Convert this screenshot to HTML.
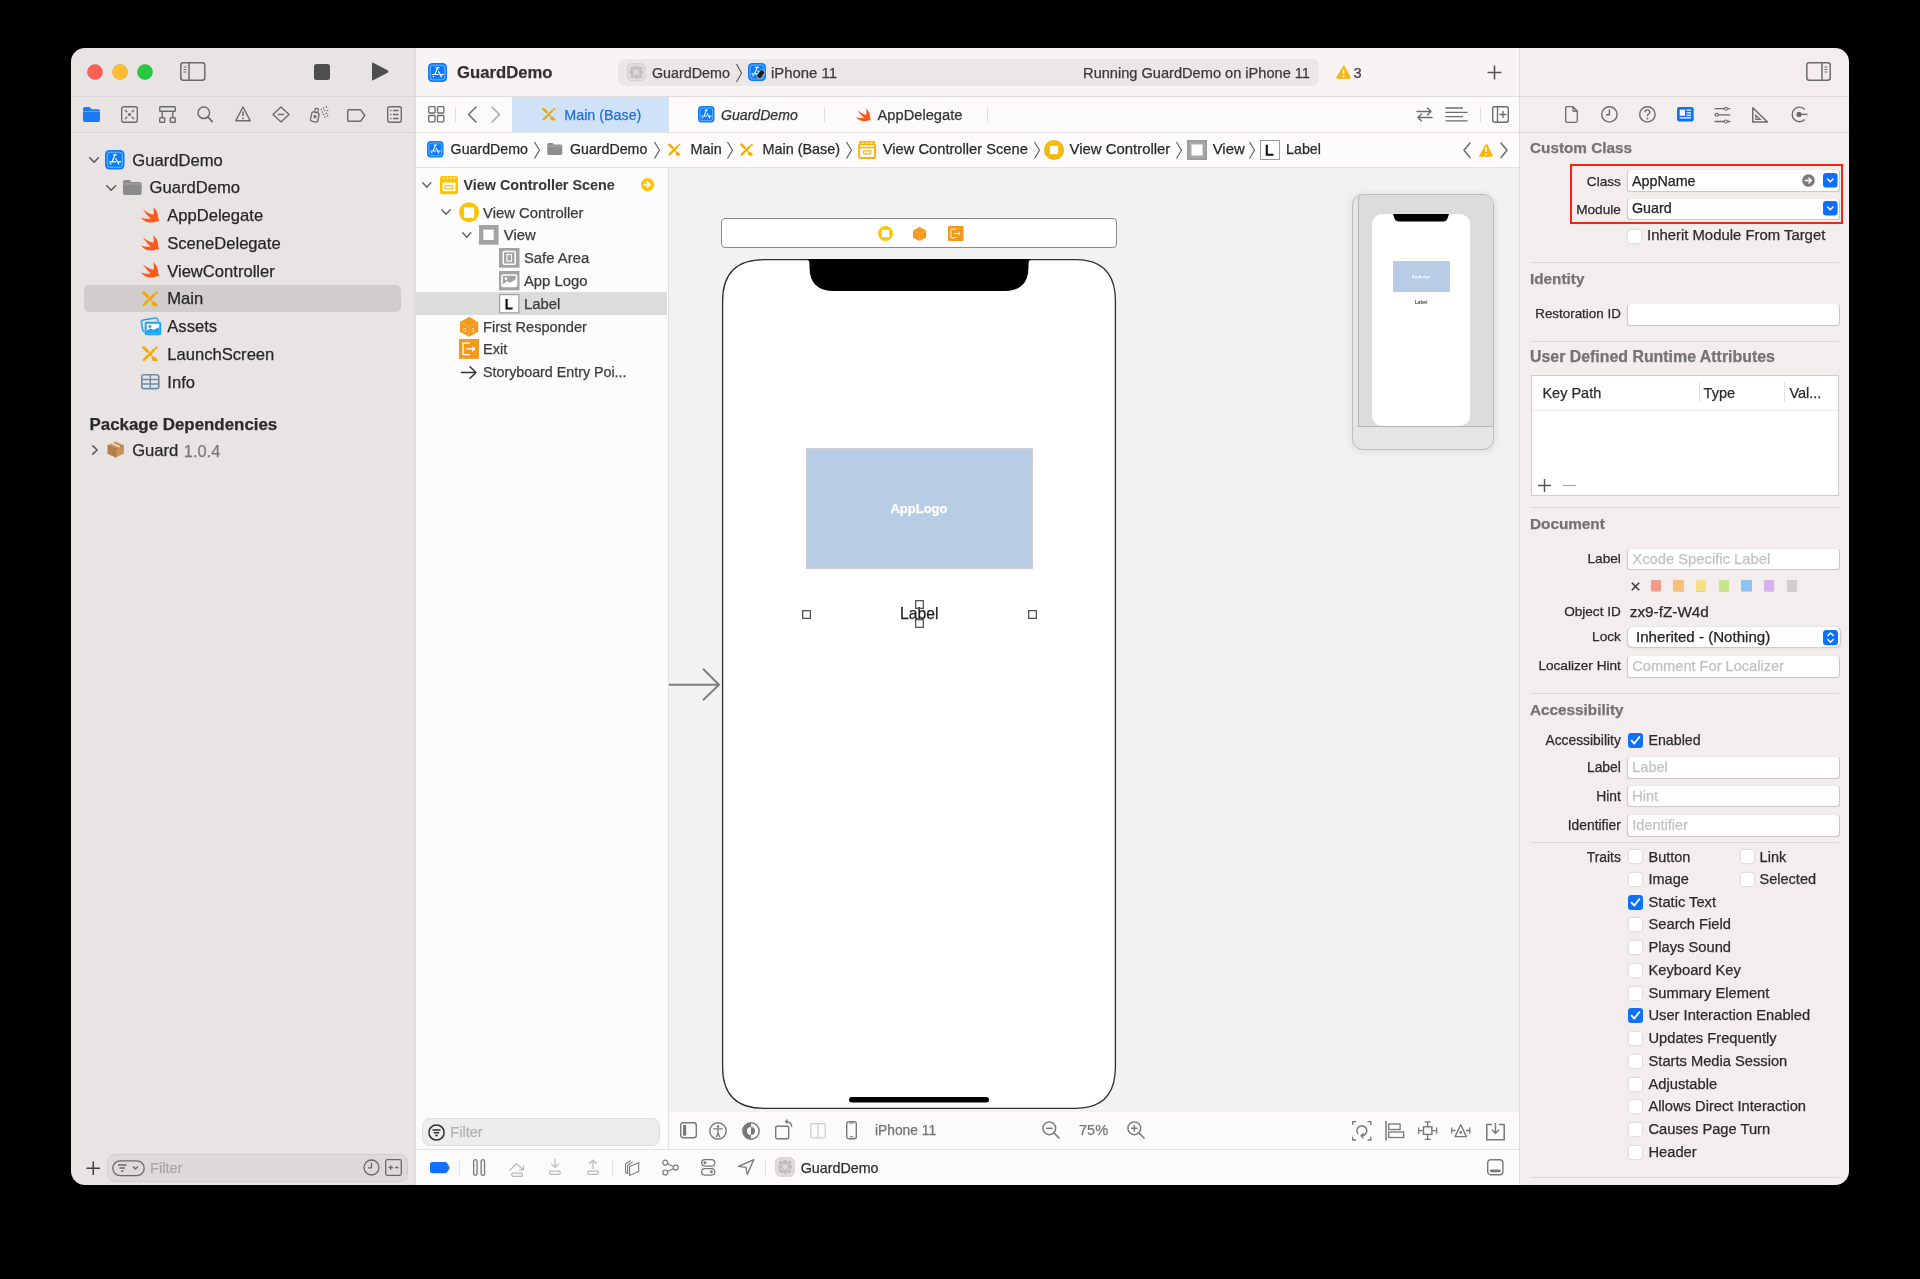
<!DOCTYPE html>
<html><head><meta charset="utf-8">
<style>
*{margin:0;padding:0;box-sizing:border-box}
html,body{width:1920px;height:1279px;background:#000;overflow:hidden;font-family:"Liberation Sans",sans-serif;color:#262626}
#win{position:absolute;left:0;top:0;width:1920px;height:1279px;clip-path:inset(48px 71px 94px 71px round 14px);-webkit-font-smoothing:antialiased;will-change:transform}
.a{position:absolute}
.t{position:absolute;white-space:nowrap;-webkit-text-stroke:0.25px currentColor}
svg{position:absolute;overflow:visible}
</style></head><body><div id="win">
<div class="a" style="left:71px;top:48px;width:345px;height:1137px;background:#e8e4e4;"></div>
<div class="a" style="left:413px;top:48px;width:3px;height:1137px;background:#e2dede;"></div>
<div class="a" style="left:71px;top:96px;width:345px;height:1px;background:#d9d5d5;"></div>
<div class="a" style="left:71px;top:132px;width:345px;height:1px;background:#d9d5d5;"></div>
<div class="a" style="left:416px;top:48px;width:1103px;height:48px;background:#f8f4f4;"></div>
<div class="a" style="left:416px;top:96px;width:1103px;height:1px;background:#e0dcdc;"></div>
<div class="a" style="left:416px;top:97px;width:1103px;height:35px;background:#fcfafa;"></div>
<div class="a" style="left:416px;top:132px;width:1103px;height:1px;background:#e6e2e2;"></div>
<div class="a" style="left:416px;top:133px;width:1103px;height:34px;background:#fdfbfb;"></div>
<div class="a" style="left:416px;top:167px;width:1103px;height:1px;background:#e6e2e2;"></div>
<div class="a" style="left:416px;top:168px;width:251.5px;height:981px;background:#fdfbfb;"></div>
<div class="a" style="left:667.5px;top:168px;width:1.5px;height:981px;background:#e6e2e2;"></div>
<div class="a" style="left:669px;top:168px;width:850px;height:944px;background:#f2f2f2;"></div>
<div class="a" style="left:669px;top:1112px;width:850px;height:37px;background:#fcfafa;"></div>
<div class="a" style="left:416px;top:1149px;width:1103px;height:1px;background:#e4e0e0;"></div>
<div class="a" style="left:416px;top:1150px;width:1103px;height:35px;background:#fcfafa;"></div>
<div class="a" style="left:1519px;top:48px;width:1px;height:1137px;background:#e0dcdc;"></div>
<div class="a" style="left:1520px;top:48px;width:329px;height:1137px;background:#f3eded;"></div>
<div class="a" style="left:1520px;top:96px;width:329px;height:1px;background:#dcd8d8;"></div>
<div class="a" style="left:1520px;top:132px;width:329px;height:1px;background:#dcd8d8;"></div>
<svg style="left:86.8px;top:64px;" width="16.0" height="16" viewBox="0 0 16.0 16"><circle cx="8" cy="8" r="7.6" fill="#fe6152" stroke="#e44a3c" stroke-width="0.4"/></svg>
<svg style="left:112.3px;top:64px;" width="16.000000000000014" height="16" viewBox="0 0 16.000000000000014 16"><circle cx="8" cy="8" r="7.6" fill="#febc2e" stroke="#dea123" stroke-width="0.4"/></svg>
<svg style="left:137.3px;top:64px;" width="16.0" height="16" viewBox="0 0 16.0 16"><circle cx="8" cy="8" r="7.6" fill="#28c840" stroke="#1aab29" stroke-width="0.4"/></svg>
<svg style="left:180px;top:62px;" width="26" height="19" viewBox="0 0 26 19"><rect x="0.8" y="0.8" width="24" height="17.4" rx="2.5" fill="none" stroke="#6b6b6b" stroke-width="1.5"/><path d="M9 1 L9 18" stroke="#6b6b6b" stroke-width="1.5"/><path d="M3.5 5 L6.5 5 M3.5 7.5 L6.5 7.5 M3.5 10 L6.5 10" stroke="#6b6b6b" stroke-width="1"/></svg>
<div class="a" style="left:314px;top:64px;width:16px;height:16px;background:#4e4e4e;border-radius:2.5px"></div>
<svg style="left:371px;top:62px;" width="18" height="19" viewBox="0 0 18 19"><path d="M1 1.2 Q1 0 2.2 0.7 L17 8.6 Q18 9.5 17 10.4 L2.2 18.3 Q1 19 1 17.8 Z" fill="#4e4e4e"/></svg>
<svg style="left:83px;top:107px;" width="17" height="15" viewBox="0 0 17 15"><path d="M0 2 Q0 0 2 0 L6.5 0 L8.5 2.2 L15 2.2 Q17 2.2 17 4.2 L17 13 Q17 15 15 15 L2 15 Q0 15 0 13 Z" fill="#1a79f5"/><path d="M0 4.6 L17 4.6" stroke="#6fb0ff" stroke-width="0.9"/></svg>
<svg style="left:121px;top:106px;" width="17" height="17" viewBox="0 0 17 17"><rect x="0.7" y="0.7" width="15.6" height="15.6" rx="2" fill="none" stroke="#6b6b6b" stroke-width="1.4"/><circle cx="8.5" cy="8.5" r="1.6" fill="#6b6b6b"/><path d="M4 4 L6.3 6.3 M13 4 L10.7 6.3 M4 13 L6.3 10.7 M13 13 L10.7 10.7" stroke="#6b6b6b" stroke-width="1.3"/></svg>
<svg style="left:159px;top:106px;" width="17" height="17" viewBox="0 0 17 17"><rect x="0.7" y="0.7" width="15.6" height="4.6" rx="0.8" fill="none" stroke="#6b6b6b" stroke-width="1.4"/><path d="M3.2 5.3 L3.2 11.5 M13.8 5.3 L13.8 11.5" stroke="#6b6b6b" stroke-width="1.4"/><rect x="0.7" y="11.8" width="5" height="4.5" rx="0.8" fill="none" stroke="#6b6b6b" stroke-width="1.4"/><rect x="11.3" y="11.8" width="5" height="4.5" rx="0.8" fill="none" stroke="#6b6b6b" stroke-width="1.4"/></svg>
<svg style="left:197px;top:106px;" width="16" height="17" viewBox="0 0 16 17"><circle cx="6.8" cy="6.8" r="5.8" fill="none" stroke="#6b6b6b" stroke-width="1.5"/><path d="M11 11 L15.2 15.6" stroke="#6b6b6b" stroke-width="1.8" stroke-linecap="round"/></svg>
<svg style="left:235px;top:106px;" width="16" height="16" viewBox="0 0 16 16"><path d="M8 1 L15.3 14.8 L0.7 14.8 Z" fill="none" stroke="#6b6b6b" stroke-width="1.4" stroke-linejoin="round"/><path d="M8 5.5 L8 10" stroke="#6b6b6b" stroke-width="1.6"/><circle cx="8" cy="12.3" r="0.9" fill="#6b6b6b"/></svg>
<svg style="left:272px;top:106px;" width="18" height="17" viewBox="0 0 18 17"><path d="M9 1 L17 8.5 L9 16 L1 8.5 Z" fill="none" stroke="#6b6b6b" stroke-width="1.4" stroke-linejoin="round"/><path d="M5.8 8.5 L12.2 8.5" stroke="#6b6b6b" stroke-width="1.5"/></svg>
<svg style="left:304px;top:102px;" width="30" height="26" viewBox="0 0 30 26"><g transform="rotate(12 10.8 14.9)"><rect x="7.1" y="10.3" width="7.4" height="9.4" rx="1.4" fill="none" stroke="#6b6b6b" stroke-width="1.3"/><rect x="11.2" y="6.2" width="3.1" height="4.1" rx="0.6" fill="none" stroke="#6b6b6b" stroke-width="1.2" transform="translate(-1.6 0)"/></g><path d="M11 13 L11 16.2 M9.6 13.8 L12.4 15.4 M12.4 13.8 L9.6 15.4" stroke="#6b6b6b" stroke-width="1.1"/><circle cx="17.3" cy="7.5" r="0.8" fill="#6b6b6b"/><circle cx="19.5" cy="6.1" r="0.8" fill="#6b6b6b"/><circle cx="22.4" cy="4.9" r="0.8" fill="#6b6b6b"/><circle cx="20.9" cy="8.5" r="0.8" fill="#6b6b6b"/><circle cx="23.6" cy="8.5" r="0.8" fill="#6b6b6b"/><circle cx="18.3" cy="10" r="0.8" fill="#6b6b6b"/><circle cx="22.4" cy="11.4" r="0.8" fill="#6b6b6b"/><circle cx="19.5" cy="12.4" r="0.8" fill="#6b6b6b"/><circle cx="23.6" cy="13.6" r="0.8" fill="#6b6b6b"/><circle cx="20.9" cy="15" r="0.8" fill="#6b6b6b"/></svg>
<svg style="left:347px;top:109px;" width="19" height="13" viewBox="0 0 19 13"><path d="M2 0.7 L13.5 0.7 L17.8 6.5 L13.5 12.3 L2 12.3 Q0.7 12.3 0.7 11 L0.7 2 Q0.7 0.7 2 0.7 Z" fill="none" stroke="#6b6b6b" stroke-width="1.4" stroke-linejoin="round"/></svg>
<svg style="left:387px;top:106px;" width="15" height="17" viewBox="0 0 15 17"><rect x="0.7" y="0.7" width="13.6" height="15.6" rx="2" fill="none" stroke="#6b6b6b" stroke-width="1.4"/><path d="M3.3 4.5 L4.5 4.5 M6 4.5 L11.5 4.5 M3.3 8.5 L4.5 8.5 M6 8.5 L11.5 8.5 M3.3 12.5 L4.5 12.5 M6 12.5 L11.5 12.5" stroke="#6b6b6b" stroke-width="1.3"/></svg>
<svg style="left:88.6px;top:157px;" width="10.200000000000003" height="6" viewBox="0 0 10.200000000000003 6"><path d="M0.8 0.8 L5.100000000000001 5.2 L9.400000000000002 0.8" fill="none" stroke="#5c5c5c" stroke-width="1.6" stroke-linecap="round" stroke-linejoin="round"/></svg>
<svg style="left:105px;top:150px;" width="19.5" height="19.5" viewBox="0 0 20 20"><rect x="0" y="0" width="20" height="20" rx="4.6" fill="#0b7bff"/><rect x="2.3" y="2.3" width="15.4" height="15.4" rx="2.6" fill="none" stroke="#8dc2ff" stroke-width="0.9"/><path d="M8.6 4.9 L11.6 4.9 M10.2 5.1 L7.4 11.8 M4.6 12.1 L10.9 12.1 M11.1 8.9 L14.2 14.6 M13.7 12.3 L16 12" stroke="#fff" stroke-width="1.25" stroke-linecap="round" fill="none"/><circle cx="5.7" cy="14.3" r="0.85" fill="#fff"/></svg>
<div class="t" style="top:140.50px;height:40px;line-height:40px;font-size:16.6px;color:#272727;left:132.3px;">GuardDemo</div>
<svg style="left:106.2px;top:185px;" width="10.299999999999997" height="6" viewBox="0 0 10.299999999999997 6"><path d="M0.8 0.8 L5.149999999999999 5.2 L9.499999999999996 0.8" fill="none" stroke="#5c5c5c" stroke-width="1.6" stroke-linecap="round" stroke-linejoin="round"/></svg>
<svg style="left:123.3px;top:180px;" width="18.700000000000003" height="15" viewBox="0 0 20 16"><path d="M0 2 Q0 0 2 0 L7 0 L9 2 L18 2 Q20 2 20 4 L20 14 Q20 16 18 16 L2 16 Q0 16 0 14 Z" fill="#8b8a8c"/><path d="M0 4.2 L20 4.2" stroke="#b9b8ba" stroke-width="0.8"/></svg>
<div class="t" style="top:168.30px;height:40px;line-height:40px;font-size:16.6px;color:#272727;left:149.6px;">GuardDemo</div>
<svg style="left:141.3px;top:206.8px;" width="18.399999999999977" height="16.0" viewBox="3.4 2.9 18 15.7"><path d="M15.2 2.9 C18.5 5.5 20.5 9 20.1 13.2 C20.6 14.8 21.2 16 21.4 17.4 C20.5 16.9 19.5 16.8 18.5 17.2 C15.5 18.6 11 18.6 7.5 16.8 C5.8 15.8 4.5 14.5 3.4 13.1 C6.5 14.5 10 14.8 12.9 14.1 C10 12 7.2 8.5 5.2 5.2 C8.5 8 12 10 15.5 10.6 C16.3 8 16 5 15.2 2.9 Z" fill="#fb5a1e"/></svg>
<div class="t" style="top:196.00px;height:40px;line-height:40px;font-size:16.6px;color:#272727;left:167.2px;">AppDelegate</div>
<svg style="left:141.3px;top:234.60000000000002px;" width="18.399999999999977" height="16.0" viewBox="3.4 2.9 18 15.7"><path d="M15.2 2.9 C18.5 5.5 20.5 9 20.1 13.2 C20.6 14.8 21.2 16 21.4 17.4 C20.5 16.9 19.5 16.8 18.5 17.2 C15.5 18.6 11 18.6 7.5 16.8 C5.8 15.8 4.5 14.5 3.4 13.1 C6.5 14.5 10 14.8 12.9 14.1 C10 12 7.2 8.5 5.2 5.2 C8.5 8 12 10 15.5 10.6 C16.3 8 16 5 15.2 2.9 Z" fill="#fb5a1e"/></svg>
<div class="t" style="top:223.80px;height:40px;line-height:40px;font-size:16.6px;color:#272727;left:167.2px;">SceneDelegate</div>
<svg style="left:141.3px;top:262.40000000000003px;" width="18.399999999999977" height="16.0" viewBox="3.4 2.9 18 15.7"><path d="M15.2 2.9 C18.5 5.5 20.5 9 20.1 13.2 C20.6 14.8 21.2 16 21.4 17.4 C20.5 16.9 19.5 16.8 18.5 17.2 C15.5 18.6 11 18.6 7.5 16.8 C5.8 15.8 4.5 14.5 3.4 13.1 C6.5 14.5 10 14.8 12.9 14.1 C10 12 7.2 8.5 5.2 5.2 C8.5 8 12 10 15.5 10.6 C16.3 8 16 5 15.2 2.9 Z" fill="#fb5a1e"/></svg>
<div class="t" style="top:251.60px;height:40px;line-height:40px;font-size:16.6px;color:#272727;left:167.2px;">ViewController</div>
<div class="a" style="left:84px;top:285px;width:317px;height:26.5px;background:#d1cdcd;border-radius:5px"></div>
<svg style="left:142.2px;top:290.5px;" width="16.400000000000006" height="15.699999999999989" viewBox="3.6 3.9 17.6 16.6"><path d="M5.3 5.3 L9.8 9.7" stroke="#f2a700" stroke-width="3.1" stroke-linecap="round"/><path d="M5.6 18.7 L16.5 7.9" stroke="#f2a700" stroke-width="2.7" stroke-linecap="round"/><circle cx="19" cy="5.8" r="1.45" fill="#f2a700"/><path d="M12.9 12.9 L14.4 14.8" stroke="#f2a700" stroke-width="1.5" stroke-linecap="round"/><path d="M14.3 15.6 Q15.5 14.6 17.5 15.6 Q18.8 16.4 19.2 17.6 Q20 18.5 21 18.7 Q19.5 20.3 16.8 20.2 Q14.8 20 14.2 18.2 Q13.8 16.7 14.3 15.6 Z" fill="#f2a700"/></svg>
<div class="t" style="top:279.20px;height:40px;line-height:40px;font-size:16.6px;color:#272727;left:167.3px;">Main</div>
<svg style="left:139.8px;top:316.5px;" width="22.0" height="18.69999999999999" viewBox="0 0 22 19"><path d="M1.2 5.5 Q0.9 3.4 3 3 L15.5 1 Q17.5 0.8 17.9 2.7 L18.2 4.3" fill="none" stroke="#1aa5f2" stroke-width="1.6"/><path d="M1.2 5.5 L2.7 13.5 Q3 15 4.6 15.2" fill="none" stroke="#1aa5f2" stroke-width="1.6"/><rect x="4.6" y="4.8" width="16.8" height="13.8" rx="2" fill="#1aa5f2"/><rect x="6.6" y="6.8" width="12.8" height="9.6" rx="0.6" fill="#fff"/><circle cx="9.8" cy="9.7" r="1.5" fill="#1aa5f2"/><path d="M6.6 16.4 L6.6 13.8 L10.5 11.8 L13.5 13 L19.4 10.5 L19.4 16.4 Z" fill="#1aa5f2"/></svg>
<div class="t" style="top:307.10px;height:40px;line-height:40px;font-size:16.6px;color:#272727;left:167.3px;">Assets</div>
<svg style="left:142.2px;top:346px;" width="16.400000000000006" height="15.699999999999989" viewBox="3.6 3.9 17.6 16.6"><path d="M5.3 5.3 L9.8 9.7" stroke="#f2a700" stroke-width="3.1" stroke-linecap="round"/><path d="M5.6 18.7 L16.5 7.9" stroke="#f2a700" stroke-width="2.7" stroke-linecap="round"/><circle cx="19" cy="5.8" r="1.45" fill="#f2a700"/><path d="M12.9 12.9 L14.4 14.8" stroke="#f2a700" stroke-width="1.5" stroke-linecap="round"/><path d="M14.3 15.6 Q15.5 14.6 17.5 15.6 Q18.8 16.4 19.2 17.6 Q20 18.5 21 18.7 Q19.5 20.3 16.8 20.2 Q14.8 20 14.2 18.2 Q13.8 16.7 14.3 15.6 Z" fill="#f2a700"/></svg>
<div class="t" style="top:334.90px;height:40px;line-height:40px;font-size:16.6px;color:#272727;left:167.3px;">LaunchScreen</div>
<svg style="left:141px;top:374.2px;" width="18.599999999999994" height="15.400000000000034" viewBox="0 0 18.6 15.4"><rect x="0.8" y="0.8" width="17" height="13.8" rx="2.2" fill="none" stroke="#6e8ca6" stroke-width="1.6"/><path d="M9.3 1 L9.3 14.5 M1 5.5 L17.8 5.5 M1 10 L17.8 10" stroke="#6e8ca6" stroke-width="1.4"/></svg>
<div class="t" style="top:362.70px;height:40px;line-height:40px;font-size:16.6px;color:#272727;left:167.3px;">Info</div>
<div class="t" style="top:404.80px;height:40px;line-height:40px;font-size:16.9px;color:#2b2b2b;font-weight:bold;left:89.5px;">Package Dependencies</div>
<svg style="left:92px;top:445px;" width="6" height="10" viewBox="0 0 6 10"><path d="M0.8 0.8 L5.2 5.0 L0.8 9.2" fill="none" stroke="#5c5c5c" stroke-width="1.6" stroke-linecap="round" stroke-linejoin="round"/></svg>
<svg style="left:106.5px;top:441px;" width="17.5" height="17" viewBox="0 0 17.5 17.3"><path d="M8.75 0.5 L17 4.2 L17 13 L8.75 16.8 L0.5 13 L0.5 4.2 Z" fill="#c9935a"/><path d="M0.5 4.2 L8.75 8 L17 4.2 M8.75 8 L8.75 16.8" stroke="#a8743f" stroke-width="0.9" fill="none"/><path d="M4.6 2.3 L12.9 6.1" stroke="#f1ddc0" stroke-width="1.6"/><path d="M0.5 4.2 L8.75 8 L8.75 16.8 L0.5 13 Z" fill="#b47f48"/></svg>
<div class="t" style="top:430.80px;height:40px;line-height:40px;font-size:16.6px;color:#272727;left:132.2px;">Guard</div>
<div class="t" style="top:430.80px;height:40px;line-height:40px;font-size:16.4px;color:#7b7878;left:183.8px;">1.0.4</div>
<svg style="left:85.5px;top:1161px;" width="14.5" height="14.5" viewBox="0 0 14.5 14.5"><path d="M7.25 0.5 L7.25 14 M0.5 7.25 L14 7.25" stroke="#3e3e3e" stroke-width="1.5"/></svg>
<div class="a" style="left:106.5px;top:1154px;width:301.5px;height:27.5px;background:#dedada;border:1px solid #d3cfcf;border-radius:8px"></div>
<svg style="left:112px;top:1159.5px;" width="33" height="16.5" viewBox="0 0 33 16.5"><rect x="0.8" y="0.8" width="31.4" height="14.8" rx="7.4" fill="none" stroke="#6a6a6a" stroke-width="1.3"/><path d="M6 5 L14.5 5 M7.5 8 L13 8 M9 11 L11.5 11" stroke="#6a6a6a" stroke-width="1.3"/><path d="M21 6.5 L23.5 9 L26 6.5" fill="none" stroke="#6a6a6a" stroke-width="1.3"/></svg>
<div class="t" style="top:1147.50px;height:40px;line-height:40px;font-size:14.6px;color:#aaa6a6;left:150px;">Filter</div>
<svg style="left:363px;top:1159px;" width="17" height="17" viewBox="0 0 17 17"><circle cx="8.5" cy="8.5" r="7.5" fill="none" stroke="#6a6a6a" stroke-width="1.3"/><path d="M8.5 3.8 L8.5 8.8 L5 8.8" fill="none" stroke="#6a6a6a" stroke-width="1.3"/></svg>
<svg style="left:384.5px;top:1159px;" width="17.0" height="17" viewBox="0 0 17.0 17"><rect x="0.7" y="0.7" width="15.6" height="15.6" rx="1.5" fill="none" stroke="#6a6a6a" stroke-width="1.3"/><path d="M3.5 8.5 L8 8.5 M5.75 6.2 L5.75 10.8 M10 8.5 L13.5 8.5" stroke="#6a6a6a" stroke-width="1.3"/></svg>
<svg style="left:428px;top:62.5px;" width="19" height="19.0" viewBox="0 0 20 20"><rect x="0" y="0" width="20" height="20" rx="4.6" fill="#0b7bff"/><rect x="2.3" y="2.3" width="15.4" height="15.4" rx="2.6" fill="none" stroke="#8dc2ff" stroke-width="0.9"/><path d="M8.6 4.9 L11.6 4.9 M10.2 5.1 L7.4 11.8 M4.6 12.1 L10.9 12.1 M11.1 8.9 L14.2 14.6 M13.7 12.3 L16 12" stroke="#fff" stroke-width="1.25" stroke-linecap="round" fill="none"/><circle cx="5.7" cy="14.3" r="0.85" fill="#fff"/></svg>
<div class="t" style="top:52.80px;height:40px;line-height:40px;font-size:16.7px;color:#333;font-weight:bold;left:457px;">GuardDemo</div>
<div class="a" style="left:618px;top:59px;width:701px;height:27px;background:#ebe7e7;border-radius:7px"></div>
<svg style="left:627px;top:63px;" width="18.5" height="18.5" viewBox="0 0 18 18"><rect x="0.6" y="0.6" width="16.8" height="16.8" rx="4.3" fill="#e2dede" stroke="#c9c5c5" stroke-width="0.7"/><circle cx="5.3" cy="5.3" r="1.9" fill="#bfbbbb"/><circle cx="9" cy="4.4" r="1.9" fill="#bfbbbb"/><circle cx="12.7" cy="5.3" r="1.9" fill="#bfbbbb"/><circle cx="4.4" cy="9" r="1.9" fill="#bfbbbb"/><circle cx="13.6" cy="9" r="1.9" fill="#bfbbbb"/><circle cx="5.3" cy="12.7" r="1.9" fill="#bfbbbb"/><circle cx="9" cy="13.6" r="1.9" fill="#bfbbbb"/><circle cx="12.7" cy="12.7" r="1.9" fill="#bfbbbb"/><circle cx="9" cy="9" r="2.6" fill="none" stroke="#c3bfbf" stroke-width="0.9"/><path d="M6.3 1 L6.3 17 M11.7 1 L11.7 17 M1 6.3 L17 6.3 M1 11.7 L17 11.7" stroke="#d0cccc" stroke-width="0.5"/></svg>
<div class="t" style="top:52.80px;height:40px;line-height:40px;font-size:14.3px;color:#3a3a3a;left:652px;">GuardDemo</div>
<svg style="left:736px;top:64px;" width="6" height="18" viewBox="0 0 6 18"><path d="M0.5 0 L5.5 9.0 L0.5 18" fill="none" stroke="#555" stroke-width="1.1"/></svg>
<svg style="left:747.5px;top:63px;" width="18.0" height="18" viewBox="0 0 20 20"><rect x="0" y="0" width="20" height="20" rx="4.6" fill="#0b7bff"/><rect x="2.3" y="2.3" width="15.4" height="15.4" rx="2.6" fill="none" stroke="#8dc2ff" stroke-width="0.9"/><path d="M8.6 4.9 L11.6 4.9 M10.2 5.1 L7.4 11.8 M4.6 12.1 L10.9 12.1 M11.1 8.9 L14.2 14.6 M13.7 12.3 L16 12" stroke="#fff" stroke-width="1.25" stroke-linecap="round" fill="none"/><circle cx="5.7" cy="14.3" r="0.85" fill="#fff"/></svg>
<svg style="left:755px;top:68px;" width="11" height="12" viewBox="0 0 11 12"><rect x="3.2" y="1.8" width="5" height="8.6" rx="1" fill="#1a1a1a" stroke="#fff" stroke-width="0.5" transform="rotate(35 5.7 6.1)"/></svg>
<div class="t" style="top:52.80px;height:40px;line-height:40px;font-size:14.9px;color:#3a3a3a;left:771px;">iPhone 11</div>
<div class="t" style="top:52.80px;height:40px;line-height:40px;font-size:14.6px;color:#3a3a3a;right:610px;">Running GuardDemo on iPhone 11</div>
<svg style="left:1335.5px;top:64.5px;" width="15.0" height="14.0" viewBox="0 0 15.0 14.0"><path d="M7.5 0.8 Q8 0.3 8.5 0.8 L14.8 12.8 Q15 13.8 14 13.8 L1 13.8 Q0 13.8 0.2 12.8 Z" fill="#f6b40e"/><path d="M7.5 4.5 L7.5 9" stroke="#fff" stroke-width="1.6"/><circle cx="7.5" cy="11.2" r="0.9" fill="#fff"/></svg>
<div class="t" style="top:52.80px;height:40px;line-height:40px;font-size:14.6px;color:#444;left:1353.5px;">3</div>
<svg style="left:1486.5px;top:65px;" width="15.0" height="15" viewBox="0 0 15.0 15"><path d="M7.5 0.5 L7.5 14.5 M0.5 7.5 L14.5 7.5" stroke="#555" stroke-width="1.6"/></svg>
<svg style="left:427.5px;top:106px;" width="16.5" height="17" viewBox="0 0 16.5 17"><rect x="0.7" y="0.7" width="6.3" height="6.3" rx="0.8" fill="none" stroke="#6b6b6b" stroke-width="1.3"/><rect x="9.5" y="0.7" width="6.3" height="6.3" rx="0.8" fill="none" stroke="#6b6b6b" stroke-width="1.3"/><rect x="0.7" y="9.5" width="6.3" height="6.3" rx="0.8" fill="none" stroke="#6b6b6b" stroke-width="1.3"/><rect x="9.5" y="9.5" width="6.3" height="6.3" rx="0.8" fill="none" stroke="#6b6b6b" stroke-width="1.3"/></svg>
<div class="a" style="left:455px;top:107px;width:1px;height:15px;background:#e2dede;"></div>
<svg style="left:467px;top:106px;" width="10" height="17" viewBox="0 0 10 17"><path d="M9 1 L1.5 8.5 L9 16" fill="none" stroke="#6b6b6b" stroke-width="1.5" stroke-linecap="round" stroke-linejoin="round"/></svg>
<svg style="left:491px;top:106px;" width="10" height="17" viewBox="0 0 10 17"><path d="M1 1 L8.5 8.5 L1 16" fill="none" stroke="#a9a9a9" stroke-width="1.5" stroke-linecap="round" stroke-linejoin="round"/></svg>
<div class="a" style="left:512px;top:97px;width:157px;height:35px;background:#cfe2f8;"></div>
<svg style="left:542px;top:107px;" width="14" height="14.5" viewBox="3.6 3.9 17.6 16.6"><path d="M5.3 5.3 L9.8 9.7" stroke="#f2a700" stroke-width="3.1" stroke-linecap="round"/><path d="M5.6 18.7 L16.5 7.9" stroke="#f2a700" stroke-width="2.7" stroke-linecap="round"/><circle cx="19" cy="5.8" r="1.45" fill="#f2a700"/><path d="M12.9 12.9 L14.4 14.8" stroke="#f2a700" stroke-width="1.5" stroke-linecap="round"/><path d="M14.3 15.6 Q15.5 14.6 17.5 15.6 Q18.8 16.4 19.2 17.6 Q20 18.5 21 18.7 Q19.5 20.3 16.8 20.2 Q14.8 20 14.2 18.2 Q13.8 16.7 14.3 15.6 Z" fill="#f2a700"/></svg>
<div class="t" style="top:95.30px;height:40px;line-height:40px;font-size:14.3px;color:#1e6fe0;left:564.3px;">Main (Base)</div>
<svg style="left:697.5px;top:106px;" width="16.5" height="16.5" viewBox="0 0 20 20"><rect x="0" y="0" width="20" height="20" rx="4.6" fill="#0b7bff"/><rect x="2.3" y="2.3" width="15.4" height="15.4" rx="2.6" fill="none" stroke="#8dc2ff" stroke-width="0.9"/><path d="M8.6 4.9 L11.6 4.9 M10.2 5.1 L7.4 11.8 M4.6 12.1 L10.9 12.1 M11.1 8.9 L14.2 14.6 M13.7 12.3 L16 12" stroke="#fff" stroke-width="1.25" stroke-linecap="round" fill="none"/><circle cx="5.7" cy="14.3" r="0.85" fill="#fff"/></svg>
<div class="t" style="top:95.30px;height:40px;line-height:40px;font-size:14.1px;color:#333;left:721px;font-style:italic;">GuardDemo</div>
<div class="a" style="left:824px;top:107px;width:1px;height:15px;background:#e2dede;"></div>
<svg style="left:856px;top:107.5px;" width="15" height="14.0" viewBox="3.4 2.9 18 15.7"><path d="M15.2 2.9 C18.5 5.5 20.5 9 20.1 13.2 C20.6 14.8 21.2 16 21.4 17.4 C20.5 16.9 19.5 16.8 18.5 17.2 C15.5 18.6 11 18.6 7.5 16.8 C5.8 15.8 4.5 14.5 3.4 13.1 C6.5 14.5 10 14.8 12.9 14.1 C10 12 7.2 8.5 5.2 5.2 C8.5 8 12 10 15.5 10.6 C16.3 8 16 5 15.2 2.9 Z" fill="#fb5a1e"/></svg>
<div class="t" style="top:95.30px;height:40px;line-height:40px;font-size:14.7px;color:#333;left:877.5px;">AppDelegate</div>
<div class="a" style="left:987px;top:107px;width:1px;height:15px;background:#e2dede;"></div>
<svg style="left:1415.5px;top:106px;" width="16.5" height="17" viewBox="0 0 16.5 17"><path d="M1 5.5 L15 5.5 M11.5 2 L15 5.5 L11.5 9 M16 11.5 L2 11.5 M5.5 8 L2 11.5 L5.5 15" fill="none" stroke="#6b6b6b" stroke-width="1.4" stroke-linecap="round" stroke-linejoin="round"/></svg>
<svg style="left:1444.5px;top:107px;" width="23.5" height="16" viewBox="0 0 23.5 16"><path d="M0.5 1 L18 1 M0.5 5.3 L22.5 5.3 M0.5 9.6 L18 9.6 M0.5 13.9 L22.5 13.9" stroke="#6b6b6b" stroke-width="1.3"/></svg>
<div class="a" style="left:1479.5px;top:107px;width:1.0px;height:15px;background:#e2dede;"></div>
<svg style="left:1491.5px;top:106px;" width="17.5" height="17" viewBox="0 0 17.5 17"><rect x="0.7" y="0.7" width="15.6" height="15.6" rx="2" fill="none" stroke="#6b6b6b" stroke-width="1.4"/><path d="M5.5 1 L5.5 16 M11 5 L11 12 M7.5 8.5 L14.5 8.5" stroke="#6b6b6b" stroke-width="1.3"/></svg>
<svg style="left:426.5px;top:141px;" width="16.5" height="16.5" viewBox="0 0 20 20"><rect x="0" y="0" width="20" height="20" rx="4.6" fill="#0b7bff"/><rect x="2.3" y="2.3" width="15.4" height="15.4" rx="2.6" fill="none" stroke="#8dc2ff" stroke-width="0.9"/><path d="M8.6 4.9 L11.6 4.9 M10.2 5.1 L7.4 11.8 M4.6 12.1 L10.9 12.1 M11.1 8.9 L14.2 14.6 M13.7 12.3 L16 12" stroke="#fff" stroke-width="1.25" stroke-linecap="round" fill="none"/><circle cx="5.7" cy="14.3" r="0.85" fill="#fff"/></svg>
<div class="t" style="top:129.20px;height:40px;line-height:40px;font-size:14.2px;color:#2a2a2a;left:450.6px;">GuardDemo</div>
<svg style="left:533.8px;top:141.5px;" width="6.0" height="16.5" viewBox="0 0 6.0 16.5"><path d="M0.5 0 L5.5 8.25 L0.5 16.5" fill="none" stroke="#5a5a5a" stroke-width="1.1"/></svg>
<svg style="left:547px;top:143px;" width="15.5" height="12" viewBox="0 0 20 16"><path d="M0 2 Q0 0 2 0 L7 0 L9 2 L18 2 Q20 2 20 4 L20 14 Q20 16 18 16 L2 16 Q0 16 0 14 Z" fill="#8e8d8f"/><path d="M0 4.2 L20 4.2" stroke="#b9b8ba" stroke-width="0.8"/></svg>
<div class="t" style="top:129.20px;height:40px;line-height:40px;font-size:14.2px;color:#2a2a2a;left:570px;">GuardDemo</div>
<svg style="left:654px;top:141.5px;" width="6" height="16.5" viewBox="0 0 6 16.5"><path d="M0.5 0 L5.5 8.25 L0.5 16.5" fill="none" stroke="#5a5a5a" stroke-width="1.1"/></svg>
<svg style="left:668px;top:142.5px;" width="13" height="13.5" viewBox="3.6 3.9 17.6 16.6"><path d="M5.3 5.3 L9.8 9.7" stroke="#f2a700" stroke-width="3.1" stroke-linecap="round"/><path d="M5.6 18.7 L16.5 7.9" stroke="#f2a700" stroke-width="2.7" stroke-linecap="round"/><circle cx="19" cy="5.8" r="1.45" fill="#f2a700"/><path d="M12.9 12.9 L14.4 14.8" stroke="#f2a700" stroke-width="1.5" stroke-linecap="round"/><path d="M14.3 15.6 Q15.5 14.6 17.5 15.6 Q18.8 16.4 19.2 17.6 Q20 18.5 21 18.7 Q19.5 20.3 16.8 20.2 Q14.8 20 14.2 18.2 Q13.8 16.7 14.3 15.6 Z" fill="#f2a700"/></svg>
<div class="t" style="top:129.20px;height:40px;line-height:40px;font-size:14.4px;color:#2a2a2a;left:690.6px;">Main</div>
<svg style="left:727px;top:141.5px;" width="6" height="16.5" viewBox="0 0 6 16.5"><path d="M0.5 0 L5.5 8.25 L0.5 16.5" fill="none" stroke="#5a5a5a" stroke-width="1.1"/></svg>
<svg style="left:739.7px;top:142.5px;" width="13.299999999999955" height="13.5" viewBox="3.6 3.9 17.6 16.6"><path d="M5.3 5.3 L9.8 9.7" stroke="#f2a700" stroke-width="3.1" stroke-linecap="round"/><path d="M5.6 18.7 L16.5 7.9" stroke="#f2a700" stroke-width="2.7" stroke-linecap="round"/><circle cx="19" cy="5.8" r="1.45" fill="#f2a700"/><path d="M12.9 12.9 L14.4 14.8" stroke="#f2a700" stroke-width="1.5" stroke-linecap="round"/><path d="M14.3 15.6 Q15.5 14.6 17.5 15.6 Q18.8 16.4 19.2 17.6 Q20 18.5 21 18.7 Q19.5 20.3 16.8 20.2 Q14.8 20 14.2 18.2 Q13.8 16.7 14.3 15.6 Z" fill="#f2a700"/></svg>
<div class="t" style="top:129.20px;height:40px;line-height:40px;font-size:14.4px;color:#2a2a2a;left:762.5px;">Main (Base)</div>
<svg style="left:846px;top:141.5px;" width="6" height="16.5" viewBox="0 0 6 16.5"><path d="M0.5 0 L5.5 8.25 L0.5 16.5" fill="none" stroke="#5a5a5a" stroke-width="1.1"/></svg>
<svg style="left:857.8px;top:140.5px;" width="18.200000000000045" height="18.0" viewBox="0 0 18 18"><rect x="1" y="3.2" width="16" height="13.8" rx="1.6" fill="none" stroke="#f7b500" stroke-width="1.9"/><path d="M1 1.2 L17 1.2" stroke="#f7b500" stroke-width="2.2"/><path d="M1 6.6 L17 6.6" stroke="#f7b500" stroke-width="1.5"/><path d="M5.5 1 L4 3 M9.5 1 L8 3 M13.5 1 L12 3" stroke="#fff" stroke-width="0.9"/><rect x="5.5" y="9.8" width="7" height="3" rx="0.5" fill="none" stroke="#f7b500" stroke-width="1.3"/></svg>
<div class="t" style="top:129.20px;height:40px;line-height:40px;font-size:14.7px;color:#2a2a2a;left:882.8px;">View Controller Scene</div>
<svg style="left:1033.7px;top:141.5px;" width="6.0" height="16.5" viewBox="0 0 6.0 16.5"><path d="M0.5 0 L5.5 8.25 L0.5 16.5" fill="none" stroke="#5a5a5a" stroke-width="1.1"/></svg>
<svg style="left:1044px;top:140px;" width="20" height="20" viewBox="0 0 20 20"><circle cx="10" cy="10" r="8.7" fill="none" stroke="#f7b500" stroke-width="2.6"/><rect x="6" y="6" width="8" height="8" rx="0.8" fill="#fff"/><circle cx="10" cy="10" r="7.4" fill="#f7b500"/><rect x="5.8" y="5.8" width="8.4" height="8.4" rx="1" fill="#fff"/></svg>
<div class="t" style="top:129.20px;height:40px;line-height:40px;font-size:14.9px;color:#2a2a2a;left:1069.6px;">View Controller</div>
<svg style="left:1176px;top:141.5px;" width="6" height="16.5" viewBox="0 0 6 16.5"><path d="M0.5 0 L5.5 8.25 L0.5 16.5" fill="none" stroke="#5a5a5a" stroke-width="1.1"/></svg>
<svg style="left:1187px;top:140px;" width="20" height="20" viewBox="0 0 20 20"><rect x="0" y="0" width="20" height="20" fill="#a8a8a8"/><rect x="1" y="1" width="18" height="18" fill="none" stroke="#8c8c8c" stroke-width="0.8"/><rect x="4.5" y="4.5" width="11" height="11" fill="#fff"/></svg>
<div class="t" style="top:129.20px;height:40px;line-height:40px;font-size:14.9px;color:#2a2a2a;left:1212.7px;">View</div>
<svg style="left:1249px;top:141.5px;" width="6" height="16.5" viewBox="0 0 6 16.5"><path d="M0.5 0 L5.5 8.25 L0.5 16.5" fill="none" stroke="#5a5a5a" stroke-width="1.1"/></svg>
<svg style="left:1260px;top:140px;" width="20" height="20" viewBox="0 0 20 20"><rect x="0.5" y="0.5" width="19" height="19" fill="#fff" stroke="#9a9a9a" stroke-width="1"/><path d="M6.8 4.8 L6.8 14.8 L13.5 14.8" fill="none" stroke="#111" stroke-width="2.1"/></svg>
<div class="t" style="top:129.20px;height:40px;line-height:40px;font-size:14.3px;color:#2a2a2a;left:1286px;">Label</div>
<svg style="left:1462.5px;top:141.5px;" width="8.0" height="16.5" viewBox="0 0 8.0 16.5"><path d="M7 1 L1 8.25 L7 15.5" fill="none" stroke="#6b6b6b" stroke-width="1.5" stroke-linecap="round" stroke-linejoin="round"/></svg>
<svg style="left:1478.5px;top:142.5px;" width="14.0" height="14.0" viewBox="0 0 14.0 14.0"><path d="M7 0.8 Q7.5 0.3 8 0.8 L13.8 12.8 Q14 13.8 13 13.8 L1 13.8 Q0 13.8 0.2 12.8 Z" fill="#f6b40e"/><path d="M7 4.5 L7 9" stroke="#fff" stroke-width="1.6"/><circle cx="7" cy="11.2" r="0.9" fill="#fff"/></svg>
<svg style="left:1500px;top:141.5px;" width="8" height="16.5" viewBox="0 0 8 16.5"><path d="M1 1 L7 8.25 L1 15.5" fill="none" stroke="#6b6b6b" stroke-width="1.5" stroke-linecap="round" stroke-linejoin="round"/></svg>
<div class="a" style="left:416px;top:292px;width:251px;height:22.5px;background:#dcdcdc;"></div>
<svg style="left:421.6px;top:181.5px;" width="9.599999999999966" height="6.0" viewBox="0 0 9.599999999999966 6.0"><path d="M0.8 0.8 L4.799999999999983 5.2 L8.799999999999965 0.8" fill="none" stroke="#666" stroke-width="1.5" stroke-linecap="round" stroke-linejoin="round"/></svg>
<svg style="left:440px;top:175.6px;" width="18" height="18.200000000000017" viewBox="0 0 18 18.2"><rect x="0" y="0" width="18" height="18.2" rx="2.2" fill="#fdc300"/><path d="M3.2 2.9 L4.2 1.4 M6.8 2.9 L7.8 1.4 M10.4 2.9 L11.4 1.4 M14 2.9 L15 1.4" stroke="#fff" stroke-width="1.1"/><rect x="2.6" y="6.6" width="12.8" height="8.6" fill="#fff"/><rect x="5.1" y="9.7" width="7.8" height="3.2" rx="0.6" fill="none" stroke="#fdc300" stroke-width="1.2"/></svg>
<div class="t" style="top:165.00px;height:40px;line-height:40px;font-size:14.35px;color:#3a3a3a;font-weight:bold;left:463.5px;-webkit-text-stroke:0.1px currentColor;">View Controller Scene</div>
<svg style="left:640.8px;top:178.3px;" width="13.200000000000045" height="13.199999999999989" viewBox="0 0 13.200000000000045 13.199999999999989"><circle cx="6.6" cy="6.6" r="6.6" fill="#fdc300"/><path d="M3.3 6.6 L8.2 6.6 M6.2 4 L8.8 6.6 L6.2 9.2" fill="none" stroke="#fff" stroke-width="1.7" stroke-linecap="round" stroke-linejoin="round"/></svg>
<svg style="left:441px;top:209px;" width="10" height="6" viewBox="0 0 10 6"><path d="M0.8 0.8 L5.0 5.2 L9.2 0.8" fill="none" stroke="#666" stroke-width="1.5" stroke-linecap="round" stroke-linejoin="round"/></svg>
<svg style="left:458.9px;top:202.2px;" width="20.100000000000023" height="20.30000000000001" viewBox="0 0 20.1 20.3"><circle cx="10.05" cy="10.15" r="10" fill="#fdc300"/><rect x="5.1" y="5.3" width="10" height="10.6" fill="#fff"/></svg>
<div class="t" style="top:192.50px;height:40px;line-height:40px;font-size:14.86px;color:#3b3b3b;left:483px;">View Controller</div>
<svg style="left:461.6px;top:232px;" width="9.599999999999966" height="6" viewBox="0 0 9.599999999999966 6"><path d="M0.8 0.8 L4.799999999999983 5.2 L8.799999999999965 0.8" fill="none" stroke="#666" stroke-width="1.5" stroke-linecap="round" stroke-linejoin="round"/></svg>
<svg style="left:479.4px;top:225px;" width="19.600000000000023" height="19.69999999999999" viewBox="0 0 19.6 19.7"><rect x="0" y="0" width="19.6" height="19.7" fill="#a3a3a3"/><rect x="4.4" y="4.7" width="10.2" height="10.3" fill="#fff"/></svg>
<div class="t" style="top:215.30px;height:40px;line-height:40px;font-size:14.86px;color:#3b3b3b;left:503.8px;">View</div>
<svg style="left:499.2px;top:248.3px;" width="20.500000000000057" height="19.69999999999999" viewBox="0 0 20.5 19.7"><rect x="0" y="0" width="20.5" height="19.7" fill="#a3a3a3"/><rect x="4.3" y="3.5" width="11.9" height="12.7" rx="1" fill="none" stroke="#fff" stroke-width="1.5"/><rect x="8" y="6.5" width="4.5" height="6.7" fill="none" stroke="#fff" stroke-width="1.1"/></svg>
<div class="t" style="top:238.20px;height:40px;line-height:40px;font-size:14.86px;color:#3b3b3b;left:523.9px;">Safe Area</div>
<svg style="left:499.2px;top:271px;" width="20.500000000000057" height="19.399999999999977" viewBox="0 0 20.5 19.4"><rect x="0" y="0" width="20.5" height="19.4" fill="#a3a3a3"/><rect x="3" y="4" width="14.5" height="11.4" rx="1" fill="none" stroke="#fff" stroke-width="1.6"/><circle cx="7" cy="7.6" r="1.3" fill="#fff"/><path d="M3.5 13.5 L8 10.3 L11 11.8 L17 8.3 L17 15 L3.5 15 Z" fill="#fff"/></svg>
<div class="t" style="top:261.10px;height:40px;line-height:40px;font-size:14.86px;color:#3b3b3b;left:523.9px;">App Logo</div>
<svg style="left:499.2px;top:294px;" width="20.500000000000057" height="19.399999999999977" viewBox="0 0 20.5 19.4"><rect x="0.6" y="0.6" width="19.3" height="18.2" fill="#fff" stroke="#a3a3a3" stroke-width="1.3"/><path d="M7.6 5 L7.6 14.5 L13.6 14.5" fill="none" stroke="#111" stroke-width="2.2"/></svg>
<div class="t" style="top:283.90px;height:40px;line-height:40px;font-size:14.86px;color:#3b3b3b;left:523.9px;">Label</div>
<svg style="left:459.8px;top:316.7px;" width="18.19999999999999" height="19.69999999999999" viewBox="0 0 18.2 19.7"><path d="M9.1 0 L18.2 4.9 L18.2 14.8 L9.1 19.7 L0 14.8 L0 4.9 Z" fill="#f39a1e"/><path d="M0 4.9 L9.1 9.6 L18.2 4.9" fill="none" stroke="#f7b660" stroke-width="0.8"/><path d="M9.1 9.6 L9.1 19.7" stroke="#f7b660" stroke-width="0.8"/><text x="3.2" y="15" font-size="5.5" fill="#fff" font-family="Liberation Sans">0</text><text x="11.5" y="15" font-size="5.5" fill="#fff" font-family="Liberation Sans">1</text></svg>
<div class="t" style="top:306.60px;height:40px;line-height:40px;font-size:14.62px;color:#3b3b3b;left:483px;">First Responder</div>
<svg style="left:459px;top:338.9px;" width="20" height="19.900000000000034" viewBox="0 0 20 19.9"><rect x="0" y="0" width="20" height="19.9" fill="#f39a1e"/><path d="M11 4.2 L4 4.2 L4 15.7 L11 15.7 M12.5 6.5 L12.5 6.5" fill="none" stroke="#fff" stroke-width="1.3"/><path d="M7.5 9.95 L15.5 9.95 M13.2 7.7 L15.6 9.95 L13.2 12.2" fill="none" stroke="#fff" stroke-width="1.3"/></svg>
<div class="t" style="top:329.20px;height:40px;line-height:40px;font-size:14.62px;color:#3b3b3b;left:483px;">Exit</div>
<svg style="left:461px;top:366px;" width="16" height="13" viewBox="0 0 16 13"><path d="M0.5 6.5 L15 6.5 M9 0.7 L15 6.5 L9 12.3" fill="none" stroke="#333" stroke-width="1.5" stroke-linecap="round" stroke-linejoin="round"/></svg>
<div class="t" style="top:352.00px;height:40px;line-height:40px;font-size:14.28px;color:#3b3b3b;left:483px;">Storyboard Entry Poi...</div>
<div class="a" style="left:422px;top:1118px;width:237.5px;height:28px;background:#ededed;border:1px solid #e0dede;border-radius:8px"></div>
<svg style="left:428.4px;top:1123.5px;" width="17.0" height="17.0" viewBox="0 0 17.0 17.0"><circle cx="8.5" cy="8.5" r="7.6" fill="none" stroke="#2f2f2f" stroke-width="1.5"/><path d="M4.5 6 L12.5 6 M5.8 8.8 L11.2 8.8 M7.3 11.5 L9.7 11.5" stroke="#2f2f2f" stroke-width="1.4"/></svg>
<div class="t" style="top:1112.00px;height:40px;line-height:40px;font-size:14.6px;color:#b3b0b0;left:450.3px;">Filter</div>
<div class="a" style="left:721px;top:218px;width:396px;height:30px;background:#fff;border:1.2px solid #8a8a8a;border-radius:4px"></div>
<svg style="left:877.5px;top:226px;" width="15.0" height="15" viewBox="0 0 15.0 15"><circle cx="7.5" cy="7.5" r="7.4" fill="#fdc300"/><rect x="3.8" y="3.8" width="7.4" height="7.4" fill="#fff"/></svg>
<svg style="left:913.4px;top:226.6px;" width="13.200000000000045" height="14.0" viewBox="0 0 13.200000000000045 14.0"><path d="M6.6 0 L13.2 3.5 L13.2 10.5 L6.6 14 L0 10.5 L0 3.5 Z" fill="#f39a1e"/><path d="M0 3.5 L6.6 6.8 L13.2 3.5 M6.6 6.8 L6.6 14" fill="none" stroke="#f8c27a" stroke-width="0.6"/></svg>
<svg style="left:947.5px;top:226px;" width="15.5" height="15" viewBox="0 0 15.5 15"><rect x="0" y="0" width="15.5" height="15" rx="0.8" fill="#f39a1e"/><path d="M8.5 3.2 L3 3.2 L3 11.8 L8.5 11.8" fill="none" stroke="#fff" stroke-width="1"/><path d="M6 7.5 L12 7.5 M10.2 5.8 L12 7.5 L10.2 9.2" fill="none" stroke="#fff" stroke-width="1"/></svg>
<svg style="left:722px;top:259px;" width="394" height="850.5" viewBox="0 0 394 850.5"><path d="M42 0.6 L353.4 0.6 Q393.4 0.6 393.4 42 L393.4 808 Q393.4 849.4 353.4 849.4 L42 849.4 Q0.6 849.4 0.6 808 L0.6 42 Q0.6 0.6 42 0.6 Z" fill="#fff" stroke="#2e2e2e" stroke-width="1.3"/><path d="M84 0 L310 0 Q306.5 0.3 306.5 5 L306.5 8 Q306.5 32 282 32 L112 32 Q87.5 32 87.5 8 L87.5 5 Q87.5 0.3 84 0 Z" fill="#000"/><rect x="127" y="838" width="140" height="5.5" rx="2.75" fill="#000"/></svg>
<div class="a" style="left:805.5px;top:448px;width:227.0px;height:121px;background:#b7cce5;border:1px solid #cfcfd2"></div>
<div class="t" style="top:489.00px;height:40px;line-height:40px;font-size:13px;color:#fff;font-weight:bold;left:619px;width:600px;text-align:center;">AppLogo</div>
<div class="t" style="top:593.50px;height:40px;line-height:40px;font-size:15.7px;color:#1c1c1c;left:619.2px;width:600px;text-align:center;">Label</div>
<svg style="left:801.8px;top:609.8px;" width="9.0" height="9.0" viewBox="0 0 9.0 9.0"><rect x="0.65" y="0.65" width="7.7" height="7.7" fill="none" stroke="#555" stroke-width="1.3"/></svg>
<svg style="left:1028.2px;top:609.8px;" width="9.0" height="9.0" viewBox="0 0 9.0 9.0"><rect x="0.65" y="0.65" width="7.7" height="7.7" fill="none" stroke="#555" stroke-width="1.3"/></svg>
<svg style="left:915px;top:599.7px;" width="9" height="9.0" viewBox="0 0 9 9.0"><rect x="0.65" y="0.65" width="7.7" height="7.7" fill="none" stroke="#555" stroke-width="1.3"/></svg>
<svg style="left:915px;top:618.5px;" width="9" height="9.0" viewBox="0 0 9 9.0"><rect x="0.65" y="0.65" width="7.7" height="7.7" fill="none" stroke="#555" stroke-width="1.3"/></svg>
<svg style="left:668px;top:668px;" width="53" height="34" viewBox="0 0 53 34"><path d="M1 16.7 L51 16.7 M35 0.8 L51 16.7 L35 32.2" fill="none" stroke="#808080" stroke-width="2" stroke-linejoin="miter"/></svg>
<div class="a" style="left:1352px;top:193.5px;width:142px;height:256.5px;background:#e5e5e5;border:1px solid #bdbdbd;border-radius:11px;box-shadow:0 1px 7px 1px rgba(60,30,30,0.10);overflow:hidden"></div>
<div class="a" style="left:1358px;top:194.5px;width:135px;height:232.5px;background:#dcdcdc;border-left:1px solid #b5b5b5;border-bottom:1px solid #b5b5b5;border-top-left-radius:4px;border-top-right-radius:10px"></div>
<div class="a" style="left:1371.5px;top:214px;width:98.0px;height:212px;background:#fff;border-radius:10px"></div>
<svg style="left:1392.5px;top:214px;" width="56.0" height="7.5" viewBox="0 0 56.0 7.5"><path d="M0 0 L56 0 L55 3 Q54 7.5 50 7.5 L6 7.5 Q2 7.5 1 3 Z" fill="#000"/></svg>
<div class="a" style="left:1392.5px;top:261px;width:57.0px;height:30.5px;background:#b7cce5;"></div>
<svg style="left:1400px;top:272px;" width="42" height="8" viewBox="0 0 42 8"><text x="21" y="5.5" font-size="4.2" font-weight="bold" fill="#fff" text-anchor="middle" font-family="Liberation Sans">AppLogo</text></svg>
<svg style="left:1410px;top:298px;" width="22" height="8" viewBox="0 0 22 8"><text x="11" y="6" font-size="5.2" fill="#111" text-anchor="middle" font-family="Liberation Sans">Label</text></svg>
<svg style="left:680px;top:1122px;" width="17" height="16.5" viewBox="0 0 17 16.5"><rect x="0.7" y="0.7" width="15.6" height="15.1" rx="2.5" fill="none" stroke="#787878" stroke-width="1.4"/><rect x="3" y="2.8" width="3.2" height="11" rx="1" fill="#787878"/></svg>
<svg style="left:709px;top:1121.5px;" width="18" height="18.0" viewBox="0 0 18 18.0"><circle cx="9" cy="9" r="8.2" fill="none" stroke="#787878" stroke-width="1.4"/><circle cx="9" cy="4.6" r="1.3" fill="#787878"/><path d="M4.3 6.8 L13.7 6.8 M9 6.8 L9 11 M9 11 L7.2 15.3 M9 11 L10.8 15.3" stroke="#787878" stroke-width="1.3" fill="none"/></svg>
<svg style="left:742px;top:1121.5px;" width="18" height="18.0" viewBox="0 0 18 18.0"><circle cx="9" cy="9" r="8.2" fill="none" stroke="#787878" stroke-width="1.4"/><path d="M9 0.8 A8.2 8.2 0 0 0 9 17.2 Z" fill="#787878"/><path d="M9 5 A4 4 0 0 1 9 13 Z" fill="#787878"/><path d="M9 5 A4 4 0 0 0 9 13 Z" fill="#fbf9f9"/></svg>
<svg style="left:775px;top:1118.5px;" width="18" height="20.5" viewBox="0 0 18 20.5"><rect x="0.7" y="7.2" width="13" height="12.5" rx="1.5" fill="none" stroke="#787878" stroke-width="1.4"/><path d="M10.5 2.5 Q16.5 2.5 16.8 8" fill="none" stroke="#787878" stroke-width="1.3"/><path d="M12.5 0.2 L10 2.5 L12.5 4.8" fill="#787878" stroke="#787878" stroke-width="0.8"/></svg>
<svg style="left:809.5px;top:1123px;" width="16.0" height="15.5" viewBox="0 0 16.0 15.5"><rect x="0.7" y="0.7" width="14.6" height="14.1" rx="1.5" fill="none" stroke="#cfcfcf" stroke-width="1.3"/><path d="M8 1 L8 15" stroke="#cfcfcf" stroke-width="1.3"/></svg>
<svg style="left:845.8px;top:1121.4px;" width="11.0" height="18.399999999999864" viewBox="0 0 11.0 18.399999999999864"><rect x="0.7" y="0.7" width="9.6" height="17" rx="2" fill="none" stroke="#787878" stroke-width="1.4"/><path d="M3.5 2.2 L7.5 2.2 M3.5 15.8 L7.5 15.8" stroke="#787878" stroke-width="1"/></svg>
<div class="t" style="top:1111.10px;height:40px;line-height:40px;font-size:13.8px;color:#737373;left:875px;">iPhone 11</div>
<svg style="left:1041.8px;top:1121px;" width="18.200000000000045" height="18" viewBox="0 0 18.200000000000045 18"><circle cx="7.3" cy="7.3" r="6.4" fill="none" stroke="#787878" stroke-width="1.4"/><path d="M4 7.3 L10.6 7.3" stroke="#787878" stroke-width="1.4"/><path d="M11.8 11.8 L17 17" stroke="#787878" stroke-width="1.6" stroke-linecap="round"/></svg>
<div class="t" style="top:1110.30px;height:40px;line-height:40px;font-size:14.6px;color:#777;left:1079px;">75%</div>
<svg style="left:1126.8px;top:1121px;" width="18.200000000000045" height="18" viewBox="0 0 18.200000000000045 18"><circle cx="7.3" cy="7.3" r="6.4" fill="none" stroke="#787878" stroke-width="1.4"/><path d="M4 7.3 L10.6 7.3 M7.3 4 L7.3 10.6" stroke="#787878" stroke-width="1.4"/><path d="M11.8 11.8 L17 17" stroke="#787878" stroke-width="1.6" stroke-linecap="round"/></svg>
<svg style="left:1352px;top:1121px;" width="19.5" height="18.700000000000045" viewBox="0 0 19.5 18.700000000000045"><path d="M0.7 4 L0.7 0.7 L4 0.7 M15.5 0.7 L18.8 0.7 L18.8 4 M18.8 15.7 L18.8 19 L15.5 19 M4 19 L0.7 19 L0.7 15.7" fill="none" stroke="#787878" stroke-width="1.3"/><path d="M6 13 A5 5 0 1 1 10 14.8" fill="none" stroke="#787878" stroke-width="1.4"/><path d="M11.5 12.3 L9 14.8 L11.5 17.2" fill="none" stroke="#787878" stroke-width="1.3"/></svg>
<svg style="left:1385px;top:1120.5px;" width="19.5" height="19.5" viewBox="0 0 19.5 19.5"><path d="M1 0 L1 19.5" stroke="#787878" stroke-width="1.5"/><rect x="3.7" y="3" width="11.4" height="5.5" fill="none" stroke="#787878" stroke-width="1.3"/><rect x="3.7" y="11" width="15" height="5.5" fill="none" stroke="#787878" stroke-width="1.3"/></svg>
<svg style="left:1418px;top:1120.7px;" width="19.5" height="19.0" viewBox="0 0 19.5 19.0"><rect x="5.5" y="5.8" width="8.4" height="7.6" fill="none" stroke="#787878" stroke-width="1.4"/><path d="M9.7 0.8 L9.7 5.8 M6.7 0.8 L12.7 0.8 M9.7 13.4 L9.7 18.4 M6.7 18.4 L12.7 18.4 M0.7 6.5 L0.7 12.7 M0.7 9.6 L5.5 9.6 M18.7 6.5 L18.7 12.7 M13.9 9.6 L18.7 9.6" fill="none" stroke="#787878" stroke-width="1.3"/></svg>
<svg style="left:1451px;top:1124px;" width="19.5" height="13.5" viewBox="0 0 19.5 13.5"><path d="M9.75 0.8 L15.4 12.6 L4.1 12.6 Z" fill="none" stroke="#787878" stroke-width="1.4" stroke-linejoin="round"/><circle cx="9.75" cy="8.4" r="1.3" fill="#787878"/><path d="M0.7 3.5 L0.7 9.5 M0.7 6.5 L4.5 6.5 M18.8 3.5 L18.8 9.5 M15 6.5 L18.8 6.5" fill="none" stroke="#787878" stroke-width="1.3"/></svg>
<svg style="left:1486.3px;top:1122.5px;" width="19.0" height="17.5" viewBox="0 0 19.0 17.5"><path d="M6 1.5 L0.8 1.5 L0.8 16.7 L18.2 16.7 L18.2 1.5 L13 1.5" fill="none" stroke="#787878" stroke-width="1.5"/><path d="M9.5 0 L9.5 10 M6 6.8 L9.5 10.3 L13 6.8" fill="none" stroke="#787878" stroke-width="1.4"/></svg>
<svg style="left:430px;top:1161.7px;" width="19.5" height="11.299999999999955" viewBox="0 0 19.5 11.299999999999955"><path d="M2.5 0 L15 0 Q16.3 0 17.2 1.2 L19.3 4.4 Q19.7 5.65 19.3 6.9 L17.2 10.1 Q16.3 11.3 15 11.3 L2.5 11.3 Q0 11.3 0 8.8 L0 2.5 Q0 0 2.5 0 Z" fill="#0f70fb"/></svg>
<div class="a" style="left:459px;top:1160.5px;width:1px;height:14.0px;background:#e0dede;"></div>
<svg style="left:473px;top:1159px;" width="12.5" height="17" viewBox="0 0 12.5 17"><rect x="0.65" y="0.65" width="3.4" height="15.7" rx="1.7" fill="none" stroke="#787878" stroke-width="1.3"/><rect x="8.15" y="0.65" width="3.4" height="15.7" rx="1.7" fill="none" stroke="#787878" stroke-width="1.3"/></svg>
<svg style="left:508.8px;top:1161.5px;" width="16.69999999999999" height="14.5" viewBox="0 0 16.69999999999999 14.5"><path d="M0.5 8.5 L7.3 1.7 L14 7.5 M14.5 3.3 L14.5 8 L10 8" fill="none" stroke="#b9b9b9" stroke-width="1.2"/><rect x="2.8" y="11.2" width="10.6" height="3.2" rx="0.8" fill="none" stroke="#b9b9b9" stroke-width="1.2"/></svg>
<svg style="left:548.9px;top:1159px;" width="12.100000000000023" height="17" viewBox="0 0 12.100000000000023 17"><path d="M6 0 L6 8.5 M2.3 4.8 L6 8.5 L9.7 4.8" fill="none" stroke="#b9b9b9" stroke-width="1.2"/><rect x="0.8" y="12.2" width="10.4" height="3.2" rx="0.8" fill="none" stroke="#b9b9b9" stroke-width="1.2"/></svg>
<svg style="left:586.7px;top:1159px;" width="12.099999999999909" height="17" viewBox="0 0 12.099999999999909 17"><path d="M6 10 L6 1 M2.3 4.7 L6 1 L9.7 4.7" fill="none" stroke="#b9b9b9" stroke-width="1.2"/><rect x="0.8" y="12.2" width="10.4" height="3.2" rx="0.8" fill="none" stroke="#b9b9b9" stroke-width="1.2"/></svg>
<div class="a" style="left:612px;top:1160.5px;width:1px;height:14.0px;background:#e0dede;"></div>
<svg style="left:625px;top:1159px;" width="14.5" height="17" viewBox="0 0 14.5 17"><path d="M0.6 4.8 L5.8 1.6 M0.6 4.8 L0.6 13.3 L2.5 14.8 M2.6 6.2 L7.8 2.9 M2.6 6.2 L2.6 14.7 M4.6 7.6 L13.7 3.8 L13.7 12.5 L4.6 16.4 Z" fill="none" stroke="#787878" stroke-width="1.1"/></svg>
<svg style="left:661.5px;top:1159px;" width="17.0" height="17" viewBox="0 0 17.0 17"><circle cx="3.3" cy="3.6" r="2.5" fill="none" stroke="#787878" stroke-width="1.2"/><circle cx="13.7" cy="8.6" r="2.5" fill="none" stroke="#787878" stroke-width="1.2"/><circle cx="3.3" cy="13.5" r="2.5" fill="none" stroke="#787878" stroke-width="1.2"/><path d="M5.5 4.8 L11.4 7.5 M5.5 12.3 L11.4 9.7" stroke="#787878" stroke-width="1.2"/></svg>
<svg style="left:700.9px;top:1159px;" width="14.399999999999977" height="17.200000000000045" viewBox="0 0 14.399999999999977 17.200000000000045"><rect x="0.6" y="0.6" width="13.2" height="6.5" rx="3.25" fill="none" stroke="#787878" stroke-width="1.2"/><circle cx="3.9" cy="3.85" r="1.5" fill="#787878"/><rect x="0.6" y="9.6" width="13.2" height="6.5" rx="3.25" fill="none" stroke="#787878" stroke-width="1.2"/><circle cx="10.5" cy="12.85" r="1.5" fill="#787878"/></svg>
<svg style="left:738.1px;top:1159px;" width="16.399999999999977" height="16.5" viewBox="0 0 16.399999999999977 16.5"><path d="M15.8 0.6 L0.6 7.4 L8 8.4 L9.3 15.6 Z" fill="none" stroke="#787878" stroke-width="1.3" stroke-linejoin="round"/></svg>
<div class="a" style="left:765px;top:1160.5px;width:1px;height:14.0px;background:#e0dede;"></div>
<svg style="left:774.7px;top:1156.5px;" width="20.0" height="20.0" viewBox="0 0 18 18"><rect x="0.6" y="0.6" width="16.8" height="16.8" rx="4.3" fill="#e2dede" stroke="#c9c5c5" stroke-width="0.7"/><circle cx="5.3" cy="5.3" r="1.9" fill="#bfbbbb"/><circle cx="9" cy="4.4" r="1.9" fill="#bfbbbb"/><circle cx="12.7" cy="5.3" r="1.9" fill="#bfbbbb"/><circle cx="4.4" cy="9" r="1.9" fill="#bfbbbb"/><circle cx="13.6" cy="9" r="1.9" fill="#bfbbbb"/><circle cx="5.3" cy="12.7" r="1.9" fill="#bfbbbb"/><circle cx="9" cy="13.6" r="1.9" fill="#bfbbbb"/><circle cx="12.7" cy="12.7" r="1.9" fill="#bfbbbb"/><circle cx="9" cy="9" r="2.6" fill="none" stroke="#c3bfbf" stroke-width="0.9"/><path d="M6.3 1 L6.3 17 M11.7 1 L11.7 17 M1 6.3 L17 6.3 M1 11.7 L17 11.7" stroke="#d0cccc" stroke-width="0.5"/></svg>
<div class="t" style="top:1147.60px;height:40px;line-height:40px;font-size:14.3px;color:#2e2e2e;left:800.7px;">GuardDemo</div>
<svg style="left:1487px;top:1159.4px;" width="16.59999999999991" height="16.399999999999864" viewBox="0 0 16.59999999999991 16.399999999999864"><rect x="0.7" y="0.7" width="15.2" height="15" rx="3" fill="none" stroke="#787878" stroke-width="1.4"/><rect x="3" y="10.5" width="10.6" height="2.8" rx="1" fill="#787878"/></svg>
<svg style="left:1806px;top:62px;" width="25" height="19" viewBox="0 0 25 19"><rect x="0.8" y="0.8" width="23.4" height="17.4" rx="2.5" fill="none" stroke="#6b6b6b" stroke-width="1.5"/><path d="M16 1 L16 18" stroke="#6b6b6b" stroke-width="1.5"/><path d="M18.5 5 L21.5 5 M18.5 7.5 L21.5 7.5 M18.5 10 L21.5 10" stroke="#6b6b6b" stroke-width="1"/></svg>
<svg style="left:1565.2px;top:106px;" width="13.0" height="17" viewBox="0 0 13.0 17"><path d="M2 0.7 L8 0.7 L12.3 5 L12.3 14.8 Q12.3 16.3 10.8 16.3 L2 16.3 Q0.7 16.3 0.7 14.8 L0.7 2 Q0.7 0.7 2 0.7 Z M8 0.7 L8 5 L12.3 5" fill="none" stroke="#6b6b6b" stroke-width="1.3" stroke-linejoin="round"/></svg>
<svg style="left:1600.6px;top:106.2px;" width="16.800000000000182" height="16.799999999999997" viewBox="0 0 16.800000000000182 16.799999999999997"><circle cx="8.4" cy="8.4" r="7.7" fill="none" stroke="#6b6b6b" stroke-width="1.4"/><path d="M8.4 3.6 L8.4 8.8 L5 8.8" fill="none" stroke="#6b6b6b" stroke-width="1.4"/></svg>
<svg style="left:1638.5px;top:106.2px;" width="16.799999999999955" height="16.799999999999997" viewBox="0 0 16.799999999999955 16.799999999999997"><circle cx="8.4" cy="8.4" r="7.7" fill="none" stroke="#6b6b6b" stroke-width="1.4"/><path d="M6 6.3 Q6 3.9 8.4 3.9 Q10.8 3.9 10.8 6.2 Q10.8 7.6 9.2 8.4 Q8.4 8.9 8.4 10.3" fill="none" stroke="#6b6b6b" stroke-width="1.4"/><circle cx="8.4" cy="12.6" r="0.9" fill="#6b6b6b"/></svg>
<svg style="left:1676.5px;top:107.4px;" width="16.700000000000045" height="14.399999999999991" viewBox="0 0 16.700000000000045 14.399999999999991"><rect x="0" y="0" width="16.7" height="14.4" rx="2.2" fill="#0f70fb"/><rect x="2.7" y="2.7" width="5.3" height="6" fill="#fff"/><path d="M9.5 3.2 L14 3.2 M9.5 5.9 L14 5.9 M9.5 8.4 L14 8.4 M2.7 10.9 L14 10.9" stroke="#fff" stroke-width="1.2"/></svg>
<svg style="left:1714.4px;top:106.5px;" width="16.799999999999955" height="16.0" viewBox="0 0 16.799999999999955 16.0"><path d="M0.5 1.7 L16.3 1.7 M0.5 7.8 L16.3 7.8 M0.5 14.5 L16.3 14.5" stroke="#6b6b6b" stroke-width="1.3"/><circle cx="11.9" cy="1.7" r="1.5" fill="#f3eeee" stroke="#6b6b6b" stroke-width="1.1"/><circle cx="2.6" cy="7.8" r="1.5" fill="#f3eeee" stroke="#6b6b6b" stroke-width="1.1"/><circle cx="11.9" cy="14.5" r="1.5" fill="#f3eeee" stroke="#6b6b6b" stroke-width="1.1"/></svg>
<svg style="left:1752px;top:107.2px;" width="16.200000000000045" height="15.799999999999997" viewBox="0 0 16.200000000000045 15.799999999999997"><path d="M0.8 0.8 L15.4 15 L0.8 15 Z" fill="none" stroke="#6b6b6b" stroke-width="1.5" stroke-linejoin="round"/><path d="M3.8 8.2 L8.2 12.4 L3.8 12.4 Z" fill="none" stroke="#6b6b6b" stroke-width="1.2"/></svg>
<svg style="left:1790.6px;top:106.2px;" width="16.600000000000136" height="16.799999999999997" viewBox="0 0 16.600000000000136 16.799999999999997"><path d="M13.8 3.4 A7.3 7.3 0 1 0 13.8 13.4" fill="none" stroke="#6b6b6b" stroke-width="1.4"/><circle cx="8" cy="8.4" r="2.6" fill="#6b6b6b"/><path d="M8 8.4 L16.4 8.4" stroke="#6b6b6b" stroke-width="1.4"/></svg>
<div class="t" style="top:127.80px;height:40px;line-height:40px;font-size:15.3px;color:#747373;font-weight:bold;left:1530px;">Custom Class</div>
<div class="t" style="top:161.90px;height:40px;line-height:40px;font-size:13.6px;color:#2b2b2b;right:299.20000000000005px;">Class</div>
<div class="a" style="left:1628px;top:170px;width:211px;height:21px;background:#fff;border-radius:3px;box-shadow:0 0.6px 0.8px 0.3px rgba(0,0,0,0.17);"></div>
<div class="t" style="top:160.70px;height:40px;line-height:40px;font-size:14.3px;color:#222;left:1632px;">AppName</div>
<svg style="left:1802.2px;top:174px;" width="13.0" height="13" viewBox="0 0 13.0 13"><circle cx="6.5" cy="6.5" r="6.3" fill="#7b7b7b"/><path d="M3.2 6.5 L9.3 6.5 M6.8 4 L9.4 6.5 L6.8 9" fill="none" stroke="#fff" stroke-width="1.3" stroke-linecap="round" stroke-linejoin="round"/></svg>
<svg style="left:1823px;top:173px;" width="14.599999999999909" height="14.599999999999994" viewBox="0 0 14.599999999999909 14.599999999999994"><rect x="0" y="0" width="14.6" height="14.6" rx="3" fill="#0f70fb"/><path d="M4.6 6 L7.3 8.7 L10 6" fill="none" stroke="#fff" stroke-width="1.5" stroke-linecap="round" stroke-linejoin="round"/></svg>
<div class="t" style="top:189.90px;height:40px;line-height:40px;font-size:13.6px;color:#2b2b2b;right:299.20000000000005px;">Module</div>
<div class="a" style="left:1628px;top:198.6px;width:211px;height:20.0px;background:#fff;border-radius:3px;box-shadow:0 0.6px 0.8px 0.3px rgba(0,0,0,0.17);"></div>
<div class="t" style="top:188.30px;height:40px;line-height:40px;font-size:14.3px;color:#222;left:1632px;">Guard</div>
<svg style="left:1823px;top:200.8px;" width="14.599999999999909" height="14.599999999999994" viewBox="0 0 14.599999999999909 14.599999999999994"><rect x="0" y="0" width="14.6" height="14.6" rx="3" fill="#0f70fb"/><path d="M4.6 6 L7.3 8.7 L10 6" fill="none" stroke="#fff" stroke-width="1.5" stroke-linecap="round" stroke-linejoin="round"/></svg>
<div class="a" style="left:1570px;top:164px;width:272.5px;height:60px;background:transparent;border:2.5px solid #f92312"></div>
<svg style="left:1627px;top:228.5px;" width="15" height="15.0" viewBox="0 0 15 15.0"><rect x="0.4" y="0.4" width="14.2" height="14.2" rx="3.2" fill="#fff" stroke="#d6d3d3" stroke-width="0.8"/></svg>
<div class="t" style="top:215.10px;height:40px;line-height:40px;font-size:14.88px;color:#2b2b2b;left:1647px;">Inherit Module From Target</div>
<div class="a" style="left:1531px;top:262px;width:308px;height:1px;background:#dcd8d8;"></div>
<div class="t" style="top:259.10px;height:40px;line-height:40px;font-size:15.3px;color:#747373;font-weight:bold;left:1530px;">Identity</div>
<div class="t" style="top:294.00px;height:40px;line-height:40px;font-size:13.4px;color:#2b2b2b;right:299.20000000000005px;">Restoration ID</div>
<div class="a" style="left:1627.8px;top:303.7px;width:211.4000000000001px;height:20.900000000000034px;background:#fff;border-radius:3px;box-shadow:0 0.6px 0.8px 0.3px rgba(0,0,0,0.17);"></div>
<div class="a" style="left:1531px;top:340.5px;width:308px;height:1.0px;background:#dcd8d8;"></div>
<div class="t" style="top:337.10px;height:40px;line-height:40px;font-size:15.9px;color:#747373;font-weight:bold;left:1530px;">User Defined Runtime Attributes</div>
<div class="a" style="left:1531.3px;top:374.8px;width:307.29999999999995px;height:121.39999999999998px;background:#fff;border:1px solid #cfcccc"></div>
<div class="a" style="left:1532.3px;top:410px;width:305.29999999999995px;height:1px;background:#eceaea;"></div>
<div class="a" style="left:1698.5px;top:382px;width:1.0px;height:20px;background:#e2e0e0;"></div>
<div class="a" style="left:1784.3px;top:382px;width:1.0px;height:20px;background:#e2e0e0;"></div>
<div class="t" style="top:373.00px;height:40px;line-height:40px;font-size:14.5px;color:#2b2b2b;left:1542.4px;">Key Path</div>
<div class="t" style="top:373.00px;height:40px;line-height:40px;font-size:14.5px;color:#2b2b2b;left:1703.6px;">Type</div>
<div class="t" style="top:373.00px;height:40px;line-height:40px;font-size:14.5px;color:#2b2b2b;left:1789.4px;">Val...</div>
<svg style="left:1538.4px;top:478.5px;" width="13.0" height="13.0" viewBox="0 0 13.0 13.0"><path d="M6.5 0 L6.5 13 M0 6.5 L13 6.5" stroke="#555" stroke-width="1.4"/></svg>
<svg style="left:1563.4px;top:484.5px;" width="13.0" height="1.0" viewBox="0 0 13.0 1.0"><path d="M0 0.5 L13 0.5" stroke="#aaa" stroke-width="1.3"/></svg>
<div class="a" style="left:1531px;top:507px;width:308px;height:1px;background:#dcd8d8;"></div>
<div class="t" style="top:504.30px;height:40px;line-height:40px;font-size:15.3px;color:#747373;font-weight:bold;left:1530px;">Document</div>
<div class="t" style="top:538.70px;height:40px;line-height:40px;font-size:13.6px;color:#2b2b2b;right:299.20000000000005px;">Label</div>
<div class="a" style="left:1628px;top:548.7px;width:211px;height:20.59999999999991px;background:#fff;border-radius:3px;box-shadow:0 0.6px 0.8px 0.3px rgba(0,0,0,0.17);"></div>
<div class="t" style="top:538.50px;height:40px;line-height:40px;font-size:14.77px;color:#c4c1c1;left:1632.3px;">Xcode Specific Label</div>
<svg style="left:1631px;top:582px;" width="9" height="9" viewBox="0 0 9 9"><path d="M0.8 0.8 L8.2 8.2 M8.2 0.8 L0.8 8.2" stroke="#333" stroke-width="1.4"/></svg>
<div class="a" style="left:1650.8px;top:580.3px;width:10.400000000000091px;height:10.5px;background:#f39b89;border-radius:1.5px;box-shadow:0 0.5px 1px rgba(0,0,0,0.15)"></div>
<div class="a" style="left:1673.45px;top:580.3px;width:10.400000000000091px;height:10.5px;background:#f5c07e;border-radius:1.5px;box-shadow:0 0.5px 1px rgba(0,0,0,0.15)"></div>
<div class="a" style="left:1696.1px;top:580.3px;width:10.400000000000091px;height:10.5px;background:#f7df84;border-radius:1.5px;box-shadow:0 0.5px 1px rgba(0,0,0,0.15)"></div>
<div class="a" style="left:1718.75px;top:580.3px;width:10.400000000000091px;height:10.5px;background:#c8e48c;border-radius:1.5px;box-shadow:0 0.5px 1px rgba(0,0,0,0.15)"></div>
<div class="a" style="left:1741.3999999999999px;top:580.3px;width:10.400000000000091px;height:10.5px;background:#8cc1f7;border-radius:1.5px;box-shadow:0 0.5px 1px rgba(0,0,0,0.15)"></div>
<div class="a" style="left:1764.05px;top:580.3px;width:10.400000000000091px;height:10.5px;background:#d5b2ee;border-radius:1.5px;box-shadow:0 0.5px 1px rgba(0,0,0,0.15)"></div>
<div class="a" style="left:1786.6999999999998px;top:580.3px;width:10.400000000000091px;height:10.5px;background:#cfcfcf;border-radius:1.5px;box-shadow:0 0.5px 1px rgba(0,0,0,0.15)"></div>
<div class="t" style="top:592.10px;height:40px;line-height:40px;font-size:13.6px;color:#2b2b2b;right:299.20000000000005px;">Object ID</div>
<div class="t" style="top:592.10px;height:40px;line-height:40px;font-size:15.3px;color:#2b2b2b;left:1629.8px;">zx9-fZ-W4d</div>
<div class="t" style="top:617.20px;height:40px;line-height:40px;font-size:13.6px;color:#2b2b2b;right:299.20000000000005px;">Lock</div>
<div class="a" style="left:1628px;top:627.3px;width:212px;height:20.200000000000045px;background:#fff;border-radius:5px;box-shadow:0 0.5px 1.5px 0.5px rgba(0,0,0,0.18)"></div>
<div class="t" style="top:617.10px;height:40px;line-height:40px;font-size:15.1px;color:#222;left:1636px;">Inherited - (Nothing)</div>
<svg style="left:1822.5px;top:629.5px;" width="15.0" height="15.200000000000045" viewBox="0 0 15.0 15.200000000000045"><rect x="0" y="0" width="15" height="15.2" rx="3.5" fill="#0f70fb"/><path d="M4.8 5.6 L7.5 3 L10.2 5.6 M4.8 9.6 L7.5 12.2 L10.2 9.6" fill="none" stroke="#fff" stroke-width="1.4" stroke-linecap="round" stroke-linejoin="round"/></svg>
<div class="t" style="top:646.00px;height:40px;line-height:40px;font-size:13.6px;color:#2b2b2b;right:299.20000000000005px;">Localizer Hint</div>
<div class="a" style="left:1628px;top:656.2px;width:211px;height:20.5px;background:#fff;border-radius:3px;box-shadow:0 0.6px 0.8px 0.3px rgba(0,0,0,0.17);"></div>
<div class="t" style="top:645.90px;height:40px;line-height:40px;font-size:14.6px;color:#c4c1c1;left:1632.3px;">Comment For Localizer</div>
<div class="a" style="left:1531px;top:692.7px;width:308px;height:1.0px;background:#dcd8d8;"></div>
<div class="t" style="top:689.70px;height:40px;line-height:40px;font-size:15.3px;color:#747373;font-weight:bold;left:1530px;">Accessibility</div>
<div class="t" style="top:720.20px;height:40px;line-height:40px;font-size:13.85px;color:#2b2b2b;right:299.20000000000005px;">Accessibility</div>
<svg style="left:1628px;top:733px;" width="15" height="15" viewBox="0 0 15 15"><rect x="0" y="0" width="15" height="15" rx="3.3" fill="#0f70fb"/><path d="M3.6 7.7 L6.3 10.5 L11.4 4" fill="none" stroke="#fff" stroke-width="1.9" stroke-linecap="round" stroke-linejoin="round"/></svg>
<div class="t" style="top:720.10px;height:40px;line-height:40px;font-size:14.2px;color:#2b2b2b;left:1648.5px;">Enabled</div>
<div class="t" style="top:746.60px;height:40px;line-height:40px;font-size:13.85px;color:#2b2b2b;right:299.20000000000005px;">Label</div>
<div class="a" style="left:1628px;top:756.9px;width:211px;height:20.700000000000045px;background:#fff;border-radius:3px;box-shadow:0 0.6px 0.8px 0.3px rgba(0,0,0,0.17);"></div>
<div class="t" style="top:746.60px;height:40px;line-height:40px;font-size:14.5px;color:#c4c1c1;left:1632.3px;">Label</div>
<div class="t" style="top:775.50px;height:40px;line-height:40px;font-size:13.85px;color:#2b2b2b;right:299.20000000000005px;">Hint</div>
<div class="a" style="left:1628px;top:786px;width:211px;height:20.299999999999955px;background:#fff;border-radius:3px;box-shadow:0 0.6px 0.8px 0.3px rgba(0,0,0,0.17);"></div>
<div class="t" style="top:775.50px;height:40px;line-height:40px;font-size:14.5px;color:#c4c1c1;left:1632.3px;">Hint</div>
<div class="t" style="top:804.50px;height:40px;line-height:40px;font-size:13.85px;color:#2b2b2b;right:299.20000000000005px;">Identifier</div>
<div class="a" style="left:1628px;top:815px;width:211px;height:20.5px;background:#fff;border-radius:3px;box-shadow:0 0.6px 0.8px 0.3px rgba(0,0,0,0.17);"></div>
<div class="t" style="top:804.50px;height:40px;line-height:40px;font-size:14.5px;color:#c4c1c1;left:1632.3px;">Identifier</div>
<div class="a" style="left:1531px;top:841.5px;width:308px;height:1.0px;background:#dcd8d8;"></div>
<div class="t" style="top:836.50px;height:40px;line-height:40px;font-size:13.85px;color:#2b2b2b;right:299.20000000000005px;">Traits</div>
<svg style="left:1628px;top:849.3px;" width="15" height="15.0" viewBox="0 0 15 15.0"><rect x="0.4" y="0.4" width="14.2" height="14.2" rx="3.2" fill="#fff" stroke="#d6d3d3" stroke-width="0.8"/></svg>
<div class="t" style="top:836.50px;height:40px;line-height:40px;font-size:14.5px;color:#2b2b2b;left:1648.5px;">Button</div>
<svg style="left:1739.5px;top:849.3px;" width="15.0" height="15.0" viewBox="0 0 15.0 15.0"><rect x="0.4" y="0.4" width="14.2" height="14.2" rx="3.2" fill="#fff" stroke="#d6d3d3" stroke-width="0.8"/></svg>
<div class="t" style="top:836.50px;height:40px;line-height:40px;font-size:14.5px;color:#2b2b2b;left:1759.6px;">Link</div>
<svg style="left:1628px;top:872px;" width="15" height="15" viewBox="0 0 15 15"><rect x="0.4" y="0.4" width="14.2" height="14.2" rx="3.2" fill="#fff" stroke="#d6d3d3" stroke-width="0.8"/></svg>
<div class="t" style="top:859.20px;height:40px;line-height:40px;font-size:14.5px;color:#2b2b2b;left:1648.5px;">Image</div>
<svg style="left:1739.5px;top:872px;" width="15.0" height="15" viewBox="0 0 15.0 15"><rect x="0.4" y="0.4" width="14.2" height="14.2" rx="3.2" fill="#fff" stroke="#d6d3d3" stroke-width="0.8"/></svg>
<div class="t" style="top:859.20px;height:40px;line-height:40px;font-size:14.5px;color:#2b2b2b;left:1759.6px;">Selected</div>
<svg style="left:1628px;top:894.7px;" width="15" height="15.0" viewBox="0 0 15 15.0"><rect x="0" y="0" width="15" height="15" rx="3.3" fill="#0f70fb"/><path d="M3.6 7.7 L6.3 10.5 L11.4 4" fill="none" stroke="#fff" stroke-width="1.9" stroke-linecap="round" stroke-linejoin="round"/></svg>
<div class="t" style="top:881.70px;height:40px;line-height:40px;font-size:14.7px;color:#2b2b2b;left:1648.5px;">Static Text</div>
<svg style="left:1628px;top:917.45px;" width="15" height="15.0" viewBox="0 0 15 15.0"><rect x="0.4" y="0.4" width="14.2" height="14.2" rx="3.2" fill="#fff" stroke="#d6d3d3" stroke-width="0.8"/></svg>
<div class="t" style="top:904.45px;height:40px;line-height:40px;font-size:14.7px;color:#2b2b2b;left:1648.5px;">Search Field</div>
<svg style="left:1628px;top:940.2px;" width="15" height="15.0" viewBox="0 0 15 15.0"><rect x="0.4" y="0.4" width="14.2" height="14.2" rx="3.2" fill="#fff" stroke="#d6d3d3" stroke-width="0.8"/></svg>
<div class="t" style="top:927.20px;height:40px;line-height:40px;font-size:14.7px;color:#2b2b2b;left:1648.5px;">Plays Sound</div>
<svg style="left:1628px;top:962.95px;" width="15" height="15.0" viewBox="0 0 15 15.0"><rect x="0.4" y="0.4" width="14.2" height="14.2" rx="3.2" fill="#fff" stroke="#d6d3d3" stroke-width="0.8"/></svg>
<div class="t" style="top:949.95px;height:40px;line-height:40px;font-size:14.7px;color:#2b2b2b;left:1648.5px;">Keyboard Key</div>
<svg style="left:1628px;top:985.7px;" width="15" height="15.0" viewBox="0 0 15 15.0"><rect x="0.4" y="0.4" width="14.2" height="14.2" rx="3.2" fill="#fff" stroke="#d6d3d3" stroke-width="0.8"/></svg>
<div class="t" style="top:972.70px;height:40px;line-height:40px;font-size:14.7px;color:#2b2b2b;left:1648.5px;">Summary Element</div>
<svg style="left:1628px;top:1008.45px;" width="15" height="15.0" viewBox="0 0 15 15.0"><rect x="0" y="0" width="15" height="15" rx="3.3" fill="#0f70fb"/><path d="M3.6 7.7 L6.3 10.5 L11.4 4" fill="none" stroke="#fff" stroke-width="1.9" stroke-linecap="round" stroke-linejoin="round"/></svg>
<div class="t" style="top:995.45px;height:40px;line-height:40px;font-size:14.7px;color:#2b2b2b;left:1648.5px;">User Interaction Enabled</div>
<svg style="left:1628px;top:1031.2px;" width="15" height="15.0" viewBox="0 0 15 15.0"><rect x="0.4" y="0.4" width="14.2" height="14.2" rx="3.2" fill="#fff" stroke="#d6d3d3" stroke-width="0.8"/></svg>
<div class="t" style="top:1018.20px;height:40px;line-height:40px;font-size:14.7px;color:#2b2b2b;left:1648.5px;">Updates Frequently</div>
<svg style="left:1628px;top:1053.95px;" width="15" height="15.0" viewBox="0 0 15 15.0"><rect x="0.4" y="0.4" width="14.2" height="14.2" rx="3.2" fill="#fff" stroke="#d6d3d3" stroke-width="0.8"/></svg>
<div class="t" style="top:1040.95px;height:40px;line-height:40px;font-size:14.7px;color:#2b2b2b;left:1648.5px;">Starts Media Session</div>
<svg style="left:1628px;top:1076.7px;" width="15" height="15.0" viewBox="0 0 15 15.0"><rect x="0.4" y="0.4" width="14.2" height="14.2" rx="3.2" fill="#fff" stroke="#d6d3d3" stroke-width="0.8"/></svg>
<div class="t" style="top:1063.70px;height:40px;line-height:40px;font-size:14.7px;color:#2b2b2b;left:1648.5px;">Adjustable</div>
<svg style="left:1628px;top:1099.45px;" width="15" height="15.0" viewBox="0 0 15 15.0"><rect x="0.4" y="0.4" width="14.2" height="14.2" rx="3.2" fill="#fff" stroke="#d6d3d3" stroke-width="0.8"/></svg>
<div class="t" style="top:1086.45px;height:40px;line-height:40px;font-size:14.7px;color:#2b2b2b;left:1648.5px;">Allows Direct Interaction</div>
<svg style="left:1628px;top:1122.2px;" width="15" height="15.0" viewBox="0 0 15 15.0"><rect x="0.4" y="0.4" width="14.2" height="14.2" rx="3.2" fill="#fff" stroke="#d6d3d3" stroke-width="0.8"/></svg>
<div class="t" style="top:1109.20px;height:40px;line-height:40px;font-size:14.7px;color:#2b2b2b;left:1648.5px;">Causes Page Turn</div>
<svg style="left:1628px;top:1144.95px;" width="15" height="15.0" viewBox="0 0 15 15.0"><rect x="0.4" y="0.4" width="14.2" height="14.2" rx="3.2" fill="#fff" stroke="#d6d3d3" stroke-width="0.8"/></svg>
<div class="t" style="top:1131.95px;height:40px;line-height:40px;font-size:14.7px;color:#2b2b2b;left:1648.5px;">Header</div>
<div class="a" style="left:1531px;top:1176.5px;width:308px;height:1.0px;background:#dcd8d8;"></div></div></body></html>
